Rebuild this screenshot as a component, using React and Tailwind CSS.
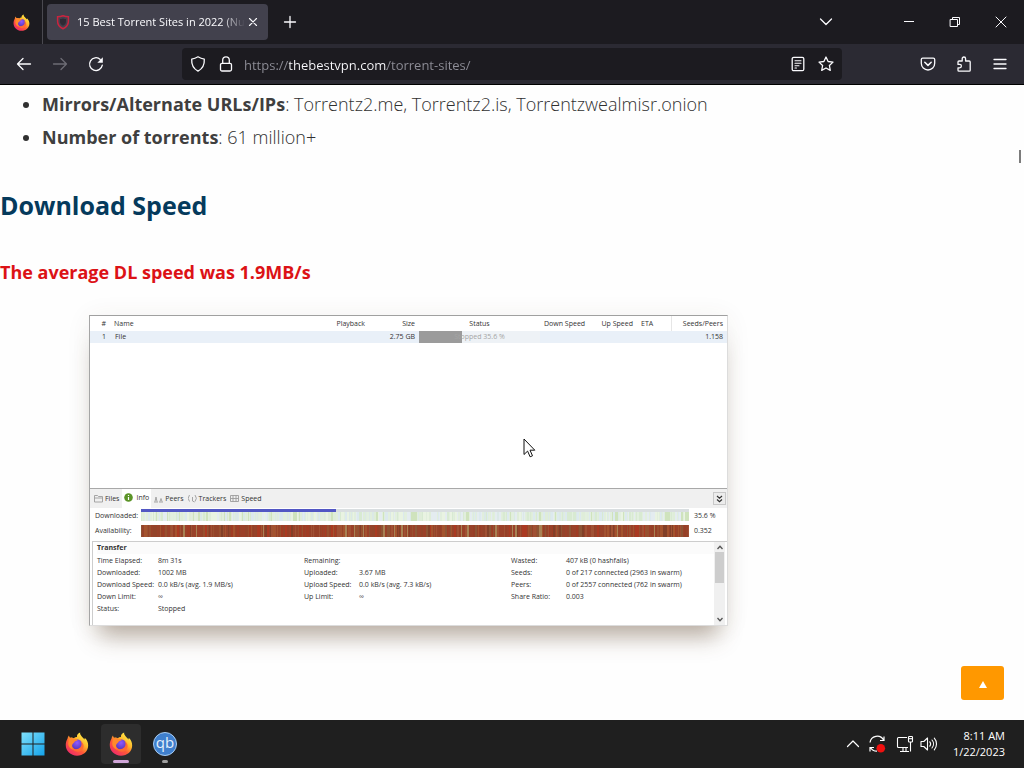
import React from "react";

function Icon({ size = 16, children, className = "" }) {
  return (
    <svg
      width={size}
      height={size}
      viewBox="0 0 16 16"
      fill="none"
      stroke="currentColor"
      strokeWidth="1.3"
      strokeLinecap="round"
      strokeLinejoin="round"
      aria-hidden="true"
      className={"shrink-0 " + className}
    >
      {children}
    </svg>
  );
}

function FirefoxLogo({ id, size }) {
  return (
    <svg width={size} height={size} viewBox="0 0 32 32" aria-hidden="true" className="shrink-0">
      <defs>
        <linearGradient id={id + "-body"} x1="0.85" y1="0.1" x2="0.2" y2="0.95">
          <stop offset="0" stopColor="#fff04a" />
          <stop offset="0.35" stopColor="#ffb52a" />
          <stop offset="0.62" stopColor="#ff5a36" />
          <stop offset="1" stopColor="#ee2a6b" />
        </linearGradient>
        <radialGradient id={id + "-core"} cx="0.5" cy="0.35" r="0.7">
          <stop offset="0" stopColor="#9059ff" />
          <stop offset="1" stopColor="#4f34b5" />
        </radialGradient>
      </defs>
      <path
        fill={"url(#" + id + "-body)"}
        d="M20.2 0.8c-.4 2.4.9 3.9 2.7 5.7 1.3 1.2 2.3 2.4 2.9 3.6.5-.6.6-1.500.4-2.300 3.100 2.600 4.800 6.400 4.700 10.400C30.700 25.800 24.200 31.500 16 31.500 7.500 31.500 1 25.300 1 17.300c0-3.400 1-6 2.300-8.300.2-1.700.8-3.300 2-4.500.2 1.300.7 2.300 1.400 3.100 1.800-.5 3.600-.2 5 .7 1-.9 2.500-1.500 4.300-1.600-.500-2.600 1.400-5 4.200-5.900z"
      />
      <circle cx="16" cy="16.500" r="7" fill={"url(#" + id + "-core)"} />
      <path
        fill="#ff8a2b"
        d="M5.200 8.800c2.500-1.600 5.200-1.500 7.200.2 1.900-.2 3.700.4 4.600 1.800-1 1-2.500 1.200-3.900 1.700-.6 1.400-1.600 2.200-2.700 3.200-2.400 3 .2 7.500 3.800 8.300-6 .2-9.800-3.800-9.900-8.600z"
      />
      <path
        fill="#ff6a33"
        d="M9.500 20.500c2.300 3 7.800 3.300 11-.2 2.100-2.600 1.900-5.800.2-8.300 3.800 2.200 5.200 6.400 3.300 10-2.200 4-6.500 5-10 3.800-2.500-.9-4-3-4.500-5.300z"
      />
    </svg>
  );
}

function IconButton({ label, className = "", children }) {
  return (
    <button type="button" aria-label={label} className={"flex items-center justify-center " + className}>
      {children}
    </button>
  );
}

function TabStrip() {
  return (
    <div className="flex h-11 items-stretch bg-[#1c1b20] text-[#fbfbfe]">
      <IconButton label="Firefox View" className="w-[43px] shrink-0 border-r border-[#4a4950]">
        <FirefoxLogo id="view" size={17} />
      </IconButton>
      <div className="ml-1 flex h-9 w-[221px] items-center self-center rounded bg-[#42414d] pl-2 pr-2">
        <svg width="16" height="16" viewBox="0 0 16 16" fill="none" aria-hidden="true" className="shrink-0">
          <path d="M8 1.800c2 .8 3.800 1 5.400 1v4.400c0 3.600-2 6-5.400 7.500C4.600 13.200 2.600 10.800 2.600 7.200V2.800c1.600 0 3.400-.2 5.400-1z" stroke="#c9243f" strokeWidth="1.500" />
          <path d="M8 4.500c1.200.4 2.200.6 3 .6v2.300c0 2-1.200 3.500-3 4.400-1.800-.9-3-2.400-3-4.400V5.100c.8 0 1.800-.2 3-.6z" fill="#2f2a35" />
        </svg>
        <span className="ml-[6px] flex-1 whitespace-nowrap text-[11px] leading-4 [mask-image:linear-gradient(to_right,black_86%,transparent)]">
          15 Best Torrent Sites in 2022 (Nu
        </span>
        <IconButton label="Close tab" className="h-4 w-4 shrink-0">
          <Icon size={14} className="text-[#fbfbfe]">
            <path d="M4 4l8 8M12 4l-8 8" />
          </Icon>
        </IconButton>
      </div>
      <IconButton label="New tab" className="ml-1 w-9">
        <Icon>
          <path d="M8 2.500v11M2.500 8h11" />
        </Icon>
      </IconButton>
      <div className="flex-1" />
      <IconButton label="List all tabs" className="w-9">
        <Icon>
          <path d="M2.500 5L8 10.500 13.500 5" />
        </Icon>
      </IconButton>
      <div className="ml-[42px] flex">
        <IconButton label="Minimize" className="w-[46px]">
          <Icon>
            <path d="M3 7.500h10" strokeWidth="1" strokeLinecap="butt" />
          </Icon>
        </IconButton>
        <IconButton label="Restore" className="w-[46px]">
          <Icon>
            <path d="M3.500 5.500h7v7h-7zM5.500 5.500v-2h7v7h-2" strokeWidth="1" strokeLinejoin="miter" />
          </Icon>
        </IconButton>
        <IconButton label="Close" className="w-[46px]">
          <Icon>
            <path d="M3 3l10 10M13 3L3 13" strokeWidth="1" />
          </Icon>
        </IconButton>
      </div>
    </div>
  );
}

function Toolbar() {
  return (
    <div className="flex h-[41px] items-center border-b border-black bg-[#2b2a33] px-[6px] text-[#fbfbfe]">
      <IconButton label="Back" className="h-8 w-9">
        <Icon>
          <path d="M14.500 8H1.500M7 2.500L1.500 8 7 13.500" />
        </Icon>
      </IconButton>
      <IconButton label="Forward" className="h-8 w-9 text-[#6d6c75]">
        <Icon>
          <path d="M1.500 8h13M9 2.500L14.500 8 9 13.500" />
        </Icon>
      </IconButton>
      <IconButton label="Reload" className="h-8 w-9">
        <Icon>
          <path d="M14.300 9.200A6.400 6.400 0 1 1 12.300 3.400" strokeWidth="1.300" />
          <path d="M14.800 1.300v5.500H9.300z" fill="currentColor" stroke="none" />
        </Icon>
      </IconButton>
      <div className="mx-[68px] flex h-8 min-w-0 flex-1 items-center rounded bg-[#1c1b20] px-[2px]">
        <IconButton label="Tracking protection" className="h-7 w-7 shrink-0">
          <Icon>
            <path d="M8 .8c1.900 1.200 4 2 6.300 2.300.3 5-.9 9.200-6.300 12-5.400-2.800-6.600-7-6.300-12C4 2.800 6.100 2 8 .8z" />
          </Icon>
        </IconButton>
        <IconButton label="Site information" className="h-7 w-7 shrink-0">
          <Icon>
            <rect x="2.500" y="7.300" width="11" height="7.700" rx="1.500" />
            <path d="M4.700 7.200V4.100a3.300 3.300 0 0 1 6.600 0v3.100" />
          </Icon>
        </IconButton>
        <input
          type="text"
          aria-label="Address"
          defaultValue="https://thebestvpn.com/torrent-sites/"
          className="ml-1 min-w-0 flex-1 bg-[linear-gradient(to_right,#8f8f98_45px,#fbfbfe_45px,#fbfbfe_143px,#8f8f98_143px)] bg-clip-text pt-px text-[13px] leading-5 text-transparent outline-none"
        />
        <IconButton label="Reader view" className="h-7 w-7 shrink-0">
          <Icon>
            <rect x="2.200" y="1.300" width="11.600" height="13.400" rx="1.500" />
            <path d="M5 4.800h6M5 7.300h6M5 9.800h4M5 12h1.500" strokeWidth="1.100" />
          </Icon>
        </IconButton>
        <IconButton label="Bookmark this page" className="h-7 w-7 shrink-0">
          <Icon>
            <path d="M8 1l2.100 4.500 4.900.6-3.600 3.400.9 4.900L8 12l-4.300 2.400.9-4.900L1 6.100l4.900-.6z" />
          </Icon>
        </IconButton>
      </div>
      <IconButton label="Save to Pocket" className="h-8 w-9">
        <Icon>
          <path d="M2.700 2.200h10.600c.8 0 1.400.6 1.400 1.400v3.700a6.700 6.700 0 0 1-13.400 0V3.600c0-.8.6-1.400 1.400-1.400z" />
          <path d="M4.800 6.300L8 9.400l3.200-3.100" strokeWidth="1.500" />
        </Icon>
      </IconButton>
      <IconButton label="Extensions" className="h-8 w-9">
        <Icon>
          <path d="M2 6c0-.6.4-1 1-1h3.200V2.700a1.700 1.700 0 0 1 3.400 0V5h3.600c.6 0 1 .4 1 1v8.200c0 .6-.4 1-1 1H3c-.6 0-1-.4-1-1v-2.400h1.700a1.700 1.700 0 0 0 0-3.400H2z" />
        </Icon>
      </IconButton>
      <IconButton label="Open menu" className="h-8 w-9">
        <Icon>
          <path d="M2 3.500h12M2 8h12M2 12.500h12" />
        </Icon>
      </IconButton>
    </div>
  );
}

function makeStripes(seed, count, colors) {
  let s = seed;
  const next = () => {
    s = (s * 16807) % 2147483647;
    return s / 2147483647;
  };
  return Array.from({ length: count }, (_, i) => ({
    x: i * 2 + (next() > 0.7 ? 1 : 0),
    w: 1 + Math.floor(next() * 3),
    c: colors[Math.floor(next() * colors.length)],
  }));
}

const downloadedStripes = makeStripes(77, 274, [
  "#e2efdf", "#d8ead2", "#e4ecf0", "#dbe9e6", "#e9f3e2", "#cfe3bd", "#dfedd9", "#dce9ee",
]);
const availabilityStripes = makeStripes(1234, 274, [
  "#a03c24", "#93442a", "#a3532e", "#aa3a22", "#8d5434", "#9b4129", "#a88254", "#824028", "#a05134", "#964027", "#98502f",
]);

function StripeBar({ stripes, base, className }) {
  return (
    <svg viewBox="0 0 548 12" preserveAspectRatio="none" className={"block w-full " + className} style={{ background: base }} aria-hidden="true">
      {stripes.map((b, i) => (
        <rect key={i} x={b.x} y="0" width={b.w} height="12" fill={b.c} />
      ))}
    </svg>
  );
}

const details = [
  ["Time Elapsed:", "8m 31s", "Remaining:", "", "Wasted:", "407 kB (0 hashfails)"],
  ["Downloaded:", "1002 MB", "Uploaded:", "3.67 MB", "Seeds:", "0 of 217 connected (2963 in swarm)"],
  ["Download Speed:", "0.0 kB/s (avg. 1.9 MB/s)", "Upload Speed:", "0.0 kB/s (avg. 7.3 kB/s)", "Peers:", "0 of 2557 connected (762 in swarm)"],
  ["Down Limit:", "∞", "Up Limit:", "∞", "Share Ratio:", "0.003"],
  ["Status:", "Stopped", "", "", "", ""],
];

function TabIcon({ name }) {
  if (name === "Info") {
    return (
      <svg width="9" height="9" viewBox="0 0 9 9" aria-hidden="true" className="shrink-0">
        <circle cx="4.500" cy="4.500" r="4.300" fill="#5c9428" />
        <path d="M4.500 4v3M4.500 2v1" stroke="#fff" strokeWidth="1.200" />
      </svg>
    );
  }
  const shapes = {
    Files: <path d="M.5 1.500h3l1 1h4v5.500h-8zM.5 4h8" />,
    Peers: <path d="M0 8h4M1 7.500L2 3l1 4.500M5 8h4M6 7.500l1-3 1 3" />,
    Trackers: <path d="M1.500 1a5 5 0 0 0 0 6.500M7 1a5 5 0 0 1 0 6.500M4.500 3v4l2 1" />,
    Speed: <path d="M.5 1.500h8v6h-8zM.5 4.500h8M3 1.500v6M6 1.500v6" />,
  };
  return (
    <svg width="9" height="9" viewBox="0 0 9 9" fill="none" stroke="#9c9c9c" strokeWidth="0.900" aria-hidden="true" className="shrink-0">
      {shapes[name]}
    </svg>
  );
}

function TorrentClient() {
  return (
    <div className="relative ml-[89px] mt-[27px] flex w-[639px] flex-col border border-[#dcdcdc] border-l-[#a5a5a5] border-t-[#a0a0a0] bg-white text-[7px] leading-3 text-[#333] shadow-[0_20px_22px_-10px_rgba(92,66,40,0.42),0_2px_24px_rgba(92,66,40,0.07)]">
      <table className="w-full table-fixed border-collapse">
        <colgroup>
          <col className="w-[20px]" />
          <col />
          <col className="w-[60px]" />
          <col className="w-[50px]" />
          <col className="w-[121px]" />
          <col className="w-[49px]" />
          <col className="w-[48px]" />
          <col className="w-[34px]" />
          <col className="w-[56px]" />
        </colgroup>
        <thead>
          <tr className="h-[15px] whitespace-nowrap text-right [&>th]:p-0 [&>th]:px-1 [&>th]:font-normal">
            <th>#</th>
            <th className="text-left">Name</th>
            <th>Playback</th>
            <th>Size</th>
            <th className="text-center">Status</th>
            <th>Down Speed</th>
            <th>Up Speed</th>
            <th className="text-left">ETA</th>
            <th className="border-l border-[#e6e6e6]">Seeds/Peers</th>
          </tr>
        </thead>
        <tbody>
          <tr className="h-3 whitespace-nowrap bg-[#e9f0f8] text-right [&>td]:p-0 [&>td]:px-1">
            <td>1</td>
            <td className="text-left"><span className="pl-px">File</span></td>
            <td></td>
            <td>2.75 GB</td>
            <td className="bg-[linear-gradient(to_right,#9b9b9b_43px,#eef2f6_43px)] text-center text-[#a5a5a5]">
              Stopped 35.6 %
            </td>
            <td></td>
            <td></td>
            <td></td>
            <td>1.158</td>
          </tr>
        </tbody>
      </table>

      <div className="h-[145px]" />

      <div className="flex h-5 items-center border-t border-[#a8a8a8] bg-[#f0f0f0] pl-[3px]">
        <div className="flex flex-1 items-stretch gap-[2px]">
          {["Files", "Info", "Peers", "Trackers", "Speed"].map((name) => (
            <button
              key={name}
              type="button"
              className={
                name === "Info"
                  ? "flex h-[19px] items-center gap-[3px] bg-white px-[2px] pb-[2px]"
                  : "flex h-[19px] items-center gap-[2px] px-px"
              }
            >
              <TabIcon name={name} />
              {name}
            </button>
          ))}
        </div>
        <IconButton label="Collapse details" className="mr-px h-[13px] w-[13px] border border-[#c8c8c8] bg-[#ececec]">
          <svg width="7" height="8" viewBox="0 0 7 8" fill="none" stroke="#333" strokeWidth="1.200" aria-hidden="true">
            <path d="M1 1l2.500 2.200L6 1M1 4.500l2.500 2.200L6 4.500" />
          </svg>
        </IconButton>
      </div>

      <div className="grid grid-cols-[46px_1fr_33px] items-center gap-x-[5px] pb-1">
        <span className="pl-[5px] pt-[2px]">Downloaded:</span>
        <div className="h-3">
          <div className="h-[3px] w-full bg-[#d9dee0]">
            <div className="h-full w-[195px] bg-[#5257c4]" />
          </div>
          <StripeBar stripes={downloadedStripes} base="#e1eedd" className="h-[9px]" />
        </div>
        <span className="pt-[2px]">35.6 %</span>
        <span className="pl-[5px] pt-[3px]">Availability:</span>
        <StripeBar stripes={availabilityStripes} base="#97432a" className="mt-[3px] h-3" />
        <span className="pt-[3px]">0.352</span>
      </div>

      <div className="ml-[2px] flex border-l border-t border-[#cdcdcd]">
        <div className="min-w-0 flex-1 pb-[10px] pl-1">
          <div className="bg-[#fbfbfb] font-bold">Transfer</div>
          <dl className="mt-px grid grid-cols-[61px_146px_55px_152px_55px_1fr] whitespace-nowrap">
            {details.map((row) =>
              row.map((cell, i) =>
                i % 2 === 0 ? (
                  <dt key={row[0] + i} className="h-3">{cell}</dt>
                ) : (
                  <dd key={row[0] + i} className="h-3">{cell}</dd>
                )
              )
            )}
          </dl>
        </div>
        <div className="mr-[2px] flex w-[11px] flex-col items-center bg-[#f0f0f0] py-[3px]">
          <svg width="6" height="5" viewBox="0 0 6 5" fill="none" stroke="#555" strokeWidth="1.300" aria-hidden="true">
            <path d="M.5 4L3 1.200 5.500 4" />
          </svg>
          <div className="mt-[2px] h-[31px] w-[9px] bg-[#cdcdcd]" />
          <div className="flex-1" />
          <svg width="6" height="5" viewBox="0 0 6 5" fill="none" stroke="#555" strokeWidth="1.300" aria-hidden="true">
            <path d="M.5 1L3 3.800 5.500 1" />
          </svg>
        </div>
      </div>

      <svg width="13" height="20" viewBox="0 0 13 20" aria-hidden="true" className="absolute left-[433px] top-[122px]">
        <path d="M1 1v15.500l3.600-3.400 2.500 5.700 2.400-1-2.500-5.600h4.800z" fill="#fff" stroke="#111" strokeWidth="1" />
      </svg>
    </div>
  );
}

function Page() {
  return (
    <main className="relative min-h-0 flex-1 overflow-hidden bg-[#fefefe]">
      <ul className="list-disc pl-[42px] pt-[3px] text-[18px] font-light leading-[33px] text-[#303030]">
        <li><strong className="font-bold text-[#3f3f3f]">Mirrors/Alternate URLs/IPs</strong>: Torrentz2.me, Torrentz2.is, Torrentzwealmisr.onion</li>
        <li><strong className="font-bold text-[#3f3f3f]">Number of torrents</strong>: 61 million+</li>
      </ul>
      <h2 className="mt-[31px] text-[25px] font-bold leading-10 text-[#053a5c]">Download Speed</h2>
      <p className="mt-[31px] text-[18px] font-bold leading-8 text-[#dc1216]">The average DL speed was 1.9MB/s</p>
      <TorrentClient />
      <div className="absolute right-[3px] top-[65px] h-[13px] w-[2px] bg-[#7c7c7c]" />
      <button
        type="button"
        aria-label="Back to top"
        className="absolute bottom-5 right-5 flex h-[34px] w-[43px] items-center justify-center rounded-[3px] bg-[#ff9800]"
      >
        <svg width="8" height="7" viewBox="0 0 8 7" fill="#fff" aria-hidden="true" className="mt-[3px]">
          <path d="M4 0l4 7H0z" />
        </svg>
      </button>
    </main>
  );
}

function TaskButton({ label, active = false, children }) {
  return (
    <button
      type="button"
      aria-label={label}
      className={"relative flex h-10 w-10 items-center justify-center rounded " + (active ? "bg-[#2d2d2d]" : "")}
    >
      {children}
    </button>
  );
}

function Taskbar() {
  return (
    <footer className="flex h-12 items-center bg-[#1f1f1f] pl-[13px] pr-[19px] text-white">
      <div className="flex gap-1">
        <TaskButton label="Start">
          <svg width="24" height="24" viewBox="0 0 24 24" aria-hidden="true">
            <defs>
              <linearGradient id="start" x1="0" y1="0" x2="1" y2="1">
                <stop offset="0" stopColor="#7fe0fb" />
                <stop offset="1" stopColor="#14a3ea" />
              </linearGradient>
            </defs>
            <path fill="url(#start)" d="M.5.500h11v11H.5zM12.500.500h11v11h-11zM.5 12.500h11v11H.5zM12.500 12.500h11v11h-11z" />
          </svg>
        </TaskButton>
        <TaskButton label="Firefox">
          <FirefoxLogo id="pinned" size={24} />
        </TaskButton>
        <TaskButton label="Firefox, running" active>
          <FirefoxLogo id="running" size={24} />
          <span className="absolute bottom-px h-[3px] w-4 rounded-full bg-[#d0a5d8]" />
        </TaskButton>
        <TaskButton label="qBittorrent">
          <span className="flex h-6 w-6 items-center justify-center rounded-full border border-[#a9cdf2] bg-[#3f7fcd] pb-[3px] text-[15px] leading-none text-[#e4f0fc]">
            qb
          </span>
          <span className="absolute bottom-px h-[3px] w-[6px] rounded-full bg-[#a0a0a0]" />
        </TaskButton>
      </div>
      <div className="flex-1" />
      <div className="flex items-center">
        <IconButton label="Show hidden icons" className="h-10 w-6">
          <Icon>
            <path d="M2.500 10.500L8 5l5.500 5.500" strokeWidth="1.200" />
          </Icon>
        </IconButton>
        <IconButton label="Update pending" className="h-10 w-6">
          <svg width="18" height="18" viewBox="0 0 18 18" fill="none" stroke="#fff" strokeWidth="1.200" aria-hidden="true">
            <path d="M2 7.500A7.200 7.200 0 0 1 15.500 5M16 1.500V5.500h-4M2 16.500v-4h4M2.500 12.500A7.200 7.200 0 0 0 9 16.200" />
            <circle cx="12.800" cy="13.200" r="4.300" fill="#f0100f" stroke="none" />
          </svg>
        </IconButton>
        <IconButton label="Network" className="h-10 w-8">
          <svg width="18" height="18" viewBox="0 0 18 18" fill="none" stroke="#fff" strokeWidth="1.100" aria-hidden="true">
            <path d="M11 2.500H2.500c-.6 0-1 .4-1 1v8c0 .6.400 1 1 1H12M7 12.500v3.500M10 12.500v3.500M4 16.500h9M14.500 7v9.500" />
            <rect x="12.500" y="1.500" width="4" height="5.500" rx="0.800" />
            <path d="M12.500 3.700h4" />
          </svg>
        </IconButton>
        <IconButton label="Volume" className="h-10 w-4">
          <svg width="18" height="16" viewBox="0 0 18 16" fill="none" stroke="#fff" strokeWidth="1.100" strokeLinecap="round" strokeLinejoin="round" aria-hidden="true" className="shrink-0">
            <path d="M1 5.500h2.800L7.500 2v12L3.800 10.500H1zM9.800 5.800c1 1.300 1 3.100 0 4.400M12 4c2 2.300 2 5.700 0 8M14.300 2.200c2.900 3.300 2.900 8.300 0 11.600" />
          </svg>
        </IconButton>
        <div className="ml-4 text-right text-[11px] leading-4">
          <div>8:11 AM</div>
          <div>1/22/2023</div>
        </div>
      </div>
    </footer>
  );
}

export default function App() {
  return (
    <div className="flex h-screen flex-col overflow-hidden font-['Open_Sans','Noto_Sans',sans-serif]">
      <header>
        <TabStrip />
        <Toolbar />
      </header>
      <Page />
      <Taskbar />
    </div>
  );
}
